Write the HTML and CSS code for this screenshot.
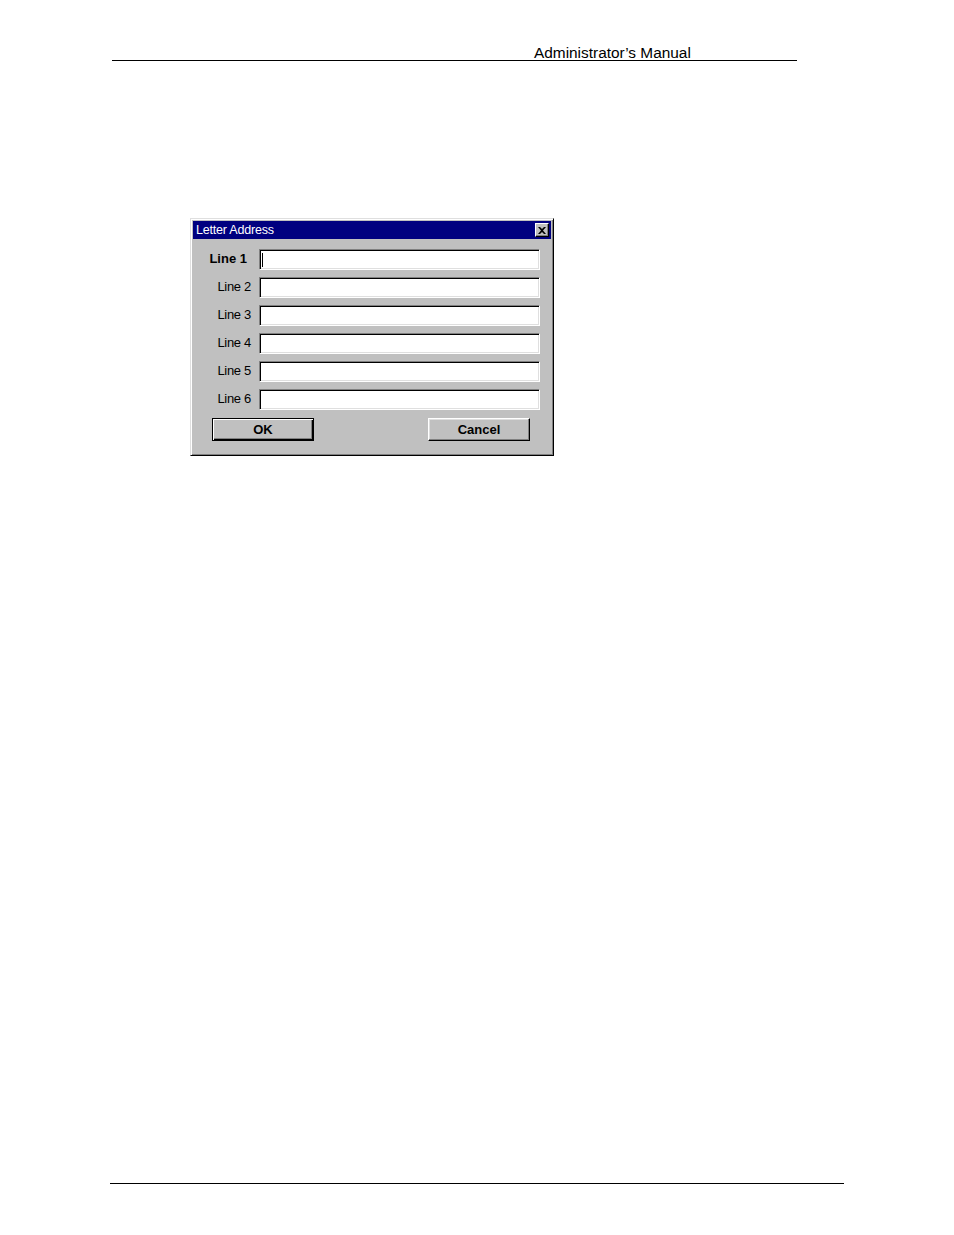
FILE: index.html
```
<!DOCTYPE html>
<html>
<head>
<meta charset="utf-8">
<link rel="stylesheet" href="styles.css">
</head>
<body>
<div class="page">
  <div class="header"><span class="header-title">Administrator’s Manual</span></div>
  <div class="dialog">
    <div class="titlebar">
      <span class="title-text">Letter Address</span>
      <span class="close-btn"><svg width="8" height="7" viewBox="0 0 8 7"><path d="M0 0h2l2 2 2-2h2L5 3.5 8 7H6L4 5 2 7H0l3-3.5z" fill="#000"/></svg></span>
    </div>
    <div class="form">
      <div class="label label-active">Line 1</div><div class="field"><span class="caret"></span></div>
      <div class="label">Line 2</div><div class="field"></div>
      <div class="label">Line 3</div><div class="field"></div>
      <div class="label">Line 4</div><div class="field"></div>
      <div class="label">Line 5</div><div class="field"></div>
      <div class="label">Line 6</div><div class="field"></div>
    </div>
    <div class="buttons">
      <div class="btn btn-default"><span>OK</span></div>
      <div class="btn"><span>Cancel</span></div>
    </div>
  </div>
  <div class="footer"></div>
</div>
</body>
</html>
```
FILE: styles.css
```
html, body {
  margin: 0;
  padding: 0;
  background: #fff;
}
.page {
  width: 954px;
  height: 1235px;
  overflow: hidden;
  font-family: "Liberation Sans", Arial, sans-serif;
}
.header {
  margin: 44px 0 0 112px;
  width: 685px;
  height: 16px;
  border-bottom: 1px solid #000;
  line-height: 18px;
  font-size: 15.4px;
  color: #000;
}
.header-title {
  display: block;
  padding-left: 422px;
}
.dialog {
  margin: 157px 0 0 190px;
  width: 364px;
  height: 238px;
  box-sizing: border-box;
  background: #c0c0c0;
  border: 1px solid;
  border-color: #dfdfdf #000 #000 #dfdfdf;
  box-shadow: inset 1px 1px 0 #fff, inset -1px -1px 0 #808080;
  padding: 2px 2px;
  font-family: "Liberation Sans", Arial, sans-serif;
}
.titlebar {
  height: 18px;
  background: #000080;
  display: flex;
  align-items: center;
  justify-content: space-between;
  padding: 0 2px 0 3px;
}
.title-text {
  color: #fff;
  font-size: 12.5px;
  letter-spacing: -0.2px;
  line-height: 18px;
}
.close-btn {
  width: 14px;
  height: 14px;
  box-sizing: border-box;
  background: #c0c0c0;
  border: 1px solid;
  border-color: #fff #000 #000 #fff;
  box-shadow: inset -1px -1px 0 #808080;
  display: flex;
  align-items: center;
  justify-content: center;
}
.form {
  display: grid;
  grid-template-columns: 58px 281px;
  column-gap: 8px;
  row-gap: 7px;
  padding: 10px 0 0 0;
  grid-auto-rows: 21px;
}
.label {
  font-size: 13px;
  color: #000;
  text-align: right;
  line-height: 20px;
  letter-spacing: -0.3px;
}
.label-active {
  font-weight: bold;
  padding-right: 4px;
  letter-spacing: 0;
}
.field {
  position: relative;
  background: #fff;
  box-sizing: border-box;
  border: 1px solid;
  border-color: #808080 #fff #fff #808080;
  box-shadow: inset 1px 1px 0 #000, inset -1px -1px 0 #dfdfdf;
}
.caret {
  position: absolute;
  left: 2px;
  top: 3px;
  width: 1px;
  height: 14px;
  background: #000;
}
.buttons {
  display: flex;
  justify-content: space-between;
  margin-top: 8px;
  padding: 0 21px 0 19px;
}
.btn {
  width: 102px;
  height: 23px;
  box-sizing: border-box;
  background: #c0c0c0;
  border: 1px solid;
  border-color: #fff #000 #000 #fff;
  box-shadow: inset -1px -1px 0 #808080, inset 1px 1px 0 #dfdfdf;
  display: flex;
  align-items: center;
  justify-content: center;
  font-size: 13px;
  font-weight: bold;
  color: #000;
}
.btn-default {
  border: 1px solid #000;
  box-shadow: inset 1px 1px 0 #fff, inset -1px -1px 0 #000, inset -2px -2px 0 #808080;
}
.footer {
  margin: 727px 0 0 110px;
  width: 734px;
  border-top: 1px solid #000;
}
```
